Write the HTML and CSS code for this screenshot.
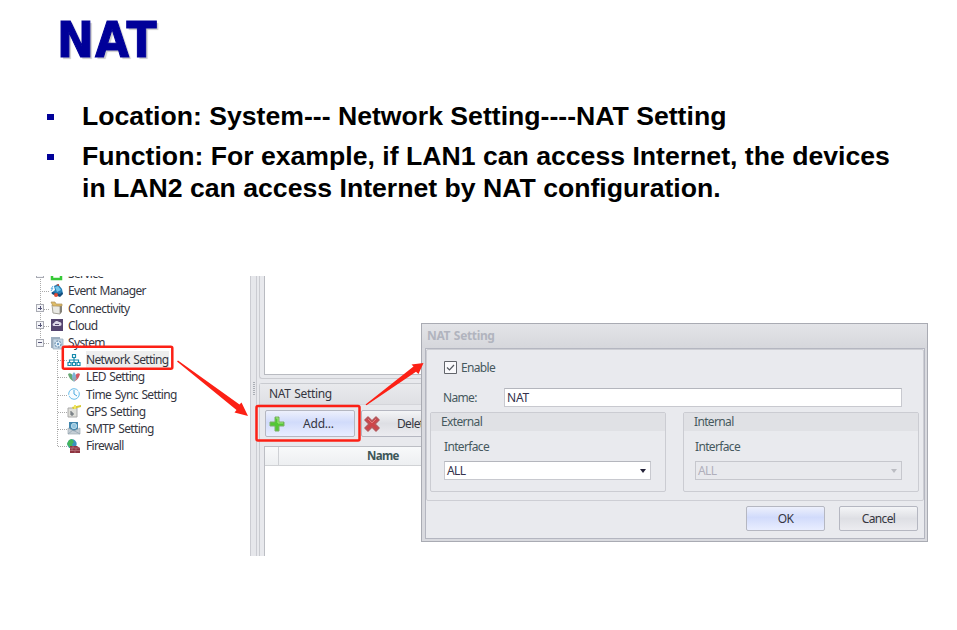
FILE: index.html
```html
<!DOCTYPE html>
<html lang="en">
<head>
<meta charset="utf-8">
<title>NAT</title>
<link rel="stylesheet" href="styles.css">
</head>
<body>
<main class="slide">
<h1 class="title">NAT</h1>
<ul class="points">
<li><span class="l1">Location: System--- Network Setting----NAT Setting</span></li>
<li><span>Function: For example, if LAN1 can access Internet, the devices<br>in LAN2 can access Internet by NAT configuration.</span></li>
</ul>
<section class="shot">
<nav class="tree">
<ul class="level0">
<li class="row"><i class="exp plus"></i><svg class="ic" viewBox="0 0 14 14"><path d="M2 7v5h9V9" fill="none" stroke="#36c936" stroke-width="2.500"/><path d="m8 9 3-4 3 4z" fill="#36c936"/></svg><span>Service</span></li>
<li class="row"><i class="exp none"></i><svg class="ic" viewBox="0 0 14 14"><path d="M1 5 3 2M1 7l2-3" stroke="#59aee0"/><path d="M4 2 8 0l4 5 1 5-9 1-3-2 4-3z" fill="#287fb5"/><path d="m5 3 3-1 3 4-4 2z" fill="#73c7ec"/><path d="m2 8 8 2 2-2 1 2-3 3-8-3z" fill="#174e7b"/><circle cx="6" cy="11" r="2" fill="#db4b36"/><path d="m6 1 3-1v2" fill="#c7452c"/></svg><span>Event Manager</span></li>
<li class="row"><i class="exp plus"></i><svg class="ic" viewBox="0 0 14 14"><path d="m2 4 8 1v8l-7-1z" fill="#e9e9e4" stroke="#a5a399"/><path d="m10 5 2-2v8l-2 2z" fill="#858177"/><path d="M1 1h4l1 2h6v2H3z" fill="#dfbd68" stroke="#ad905a" stroke-width=".7"/></svg><span>Connectivity</span></li>
<li class="row"><i class="exp plus"></i><svg class="ic" viewBox="0 0 14 14"><path d="M1 1h12v12H1z" fill="#554570"/><path d="M4 8a1.500 1.500 0 0 1 0-3 3 3 0 0 1 5-1 2 2 0 0 1 1 4z" fill="#ddd8e8"/><path d="M5 6.500h4" stroke="#554570"/></svg><span>Cloud</span></li>
<li class="row"><i class="exp minus"></i><svg class="ic" viewBox="0 0 14 14"><path d="M1 1h9v11H1z" fill="#9eafc1"/><path d="M3 3h10v10H3z" fill="#c5d7e7" stroke="#97a6b5" stroke-width=".7"/><circle cx="8" cy="8" r="3" fill="#e9f5fc" stroke="#7999b3" stroke-width="1.300" stroke-dasharray="2 1"/><circle cx="8" cy="8" r="1.200" fill="#6e9bc6"/></svg><span>System</span></li>
</ul>
<ul class="level1">
<li class="row"><svg class="ic" viewBox="0 0 14 14"><path d="M5.500 1.500h3v3h-3zM1 9.500h3v3H1zm4.500 0h3v3h-3zm4.500 0h3v3h-3zM7 5v4M2.500 9V7h9v2" fill="none" stroke="#198bad" stroke-width="1.200"/></svg><span class="sel">Network Setting</span></li>
<li class="row"><svg class="ic" viewBox="0 0 14 14"><path d="M1 4q3-2 5 2v5Q2 9 1 4" fill="#66a872"/><path d="M13 4q-3-2-5 2v5q4-2 5-7" fill="#d65761"/><path d="M7 2Q3 6 7 12q4-6 0-10" fill="#7fb4d8"/><path d="m5 8 2 4 3-4-2-1z" fill="#93a9b9"/></svg><span>LED Setting</span></li>
<li class="row"><svg class="ic" viewBox="0 0 14 14"><circle cx="7" cy="7" r="5.300" fill="#f7fcff" stroke="#68bce8" stroke-dasharray="14 1"/><path d="M7 3v4l3 2" fill="none" stroke="#4aa9df"/></svg><span>Time Sync Setting</span></li>
<li class="row"><svg class="ic" viewBox="0 0 14 14"><path d="M1 4h9v9H1z" fill="#deded9" stroke="#aaa"/><path d="M4 7v4h2V9H4" fill="none" stroke="#5c646c"/><path d="m5 3 9-2v2L6 5z" fill="#d8c936"/><path d="M8 1v4" stroke="#f1e85e" stroke-width="2"/></svg><span>GPS Setting</span></li>
<li class="row"><svg class="ic" viewBox="0 0 14 14"><path d="M2 1h9v9H2z" fill="#4286ad"/><circle cx="7" cy="5" r="2.700" fill="#93c5df" stroke="#b9d9e8"/><path d="m1 7 6 3 6-3v6H1z" fill="#c5ced5" stroke="#a1adb5" stroke-width=".7"/><path d="m1 13 5-4 7 4" fill="none" stroke="#8ea1ae" stroke-width=".7"/></svg><span>SMTP Setting</span></li>
<li class="row"><svg class="ic" viewBox="0 0 14 14"><circle cx="5" cy="5" r="4.700" fill="#3a91bd"/><path d="m2 1 3-1 2 3-2 2 1 3-3 1-3-4z" fill="#43b65b"/><path d="M3 7h7l3 2v5H3z" fill="#8f3441"/><path d="M3 9h10M3 11.500h10M6 7v2M9 9v2M5 9v3M8 12v2" stroke="#c99099" stroke-width=".5"/></svg><span>Firewall</span></li>
</ul>
</nav>
<div class="splitter"></div>
<div class="work">
<div class="upper"><div class="blank"></div></div>
<div class="lower">
<div class="phead">NAT Setting</div>
<div class="tools">
<button class="btn add"><svg viewBox="0 0 16 16"><path d="M6 1h4v5h5v4h-5v5H6v-5H1V6h5z" fill="#53c736" stroke="#7eaf68"/><path d="M7 2h2v5h5" fill="none" stroke="#a4e780"/></svg><span>Add...</span></button>
<button class="btn del"><svg viewBox="0 0 16 16"><path d="m4 1 4 4 4-4 3 3-4 4 4 4-3 3-4-4-4 4-3-3 4-4-4-4z" fill="#ce4449" stroke="#b6585c" stroke-width="1.500" stroke-linejoin="round"/><path d="m4 3 4 4 4-4" fill="none" stroke="#e17b7b"/></svg><span>Delete</span></button>
</div>
<div class="table"><div class="thead"><span></span><b>Name</b></div></div>
</div>
</div>
<div class="dialog">
<div class="dtitle">NAT Setting</div>
<div class="frame">
<div class="page">
<div class="enable"><svg viewBox="0 0 13 13"><path d="M.5.500h12v12H.5z" fill="#fafafc" stroke="#62656b"/><path d="m3 6.500 2.500 2.500L10 4" fill="none" stroke="#555960" stroke-width="1.200"/></svg><span>Enable</span></div>
<div class="namerow"><label>Name:</label><div class="field">NAT</div></div>
<div class="groups">
<div class="group"><div class="ghead">External</div><div class="glabel">Interface</div><div class="field select">ALL<i></i></div></div>
<div class="group"><div class="ghead">Internal</div><div class="glabel">Interface</div><div class="field select off">ALL<i></i></div></div>
</div>
</div>
<div class="actions"><button class="btn ok">OK</button><button class="btn cancel">Cancel</button></div>
</div>
</div>
<svg class="marks" viewBox="0 276 957 280">
<g fill="none" stroke="#fc2015" stroke-width="2.500"><rect x="62.800" y="346.800" width="109.500" height="22" rx="1.500"/><rect x="256.500" y="406" width="103" height="34.500" rx="1.500"/></g>
<g fill="#fc2015"><path d="M177 361.500 178 360.500 239.500 404.500 241.500 402.500 248 416 234.500 412.500 236.500 410z"/><path d="M365.500 404.500 413.500 366.500 411.500 364.500 423.500 363 418.500 374 416 371.800 366.500 405.300z"/></g>
</svg>
</section>
</main>
</body>
</html>
```
FILE: styles.css
```css
* { box-sizing: border-box; }
body { margin: 0; background: #fff; }
ul { list-style: none; margin: 0; padding: 0; }
.slide { width: 957px; height: 630px; overflow: hidden; }
.title {
  margin: 0; padding: 11px 0 0 57px; height: 100px;
  font: bold 49px/60px "DejaVu Sans Condensed", "DejaVu Sans", sans-serif; font-stretch: condensed;
  letter-spacing: 1.200px; -webkit-text-stroke: 1px #009;
  color: #009; text-shadow: 2px 2px 1px #ccc;
}
.points { height: 176px; font: bold 26.640px/32px "Liberation Sans", sans-serif; color: #000; }
.points li { display: flex; padding-left: 47px; margin-bottom: 8px; white-space: nowrap; }
.points li::before { content: ""; width: 7px; height: 6px; margin: 14px 28px 0 0; background: #009; }
.shot {
  position: relative; display: flex; height: 280px; overflow: hidden;
  font: 12px/17px "Noto Sans", sans-serif; letter-spacing: -.65px; word-spacing: 1px; color: #35363f; white-space: nowrap;
}
.tree { width: 250px; padding-left: 36px; margin-top: -10.800px; }
.level0 { background: repeating-linear-gradient(#aaa 0 1px, transparent 1px 2px) 4px 0 / 1px 77px no-repeat; }
.level1 { margin-left: 21px; background: repeating-linear-gradient(#aaa 0 1px, transparent 1px 2px) 0 0 / 1px 95px no-repeat; }
.row { display: flex; align-items: center; height: 17.200px; }
.level0 .row { background: repeating-linear-gradient(90deg, #aaa 0 1px, transparent 1px 2px) 4px 9px / 10px 1px no-repeat; }
.level1 .row { background: repeating-linear-gradient(90deg, #aaa 0 1px, transparent 1px 2px) 1px 9px / 9px 1px no-repeat; padding-left: 10px; }
.ic { width: 14px; height: 14px; flex: none; margin-right: 4px; }
.level1 .ic { margin-right: 5px; }
.sel { background: #eee; }
.exp { width: 8px; height: 8px; margin-right: 6px; flex: none; border: 1px solid #a9abb3; background: #f4f5f9; }
.exp.plus { background: linear-gradient(#557, #557) 1px 2.500px / 4px 1px no-repeat, linear-gradient(#557, #557) 2.500px 1px / 1px 4px no-repeat, #f4f5f9; }
.exp.minus { background: linear-gradient(#557, #557) 1px 2.500px / 4px 1px no-repeat, #f4f5f9; }
.exp.none { visibility: hidden; }
.splitter {
  width: 7px; border: solid #cbccd2; border-width: 0 1px;
  background: repeating-linear-gradient(#aaaeb5 0 1px, transparent 1px 2px) 2px 106px / 2px 13px no-repeat, #e6e7eb;
}
.work { flex: 1; max-width: 200px; padding-left: 2px; background: #e8e9ed; }
.upper { height: 103px; padding-left: 4px; border: solid #cbccd1; border-width: 0 0 1px 1px; border-radius: 0 0 0 3px; }
.blank { height: 99px; background: #fff; border: solid #b9bbc1; border-width: 0 0 1px 1px; }
.lower { margin-top: 4px; height: 173px; border: solid #c9cbd0; border-width: 1px 0 0 1px; border-radius: 3px 0 0; }
.phead { height: 21px; padding-left: 9px; line-height: 20px; letter-spacing: -.35px; background: linear-gradient(#e9eaed, #dfe0e4); border-bottom: 1px solid #d4d5da; }
.tools { display: flex; gap: 6px; padding: 5px 0 0 5px; }
.btn {
  display: flex; align-items: center; justify-content: center; padding: 0;
  border: 1px solid #b5b7c1; border-radius: 2px; font: inherit; letter-spacing: inherit; color: #35363f;
  background: linear-gradient(#f4f5f7, #dedfe4 50%, #ececf0);
}
.add, .del { width: 90px; height: 27px; justify-content: flex-start; padding-left: 3px; }
.btn svg { width: 16px; height: 16px; flex: none; }
.add, .ok { background: linear-gradient(#edf0fc, #d1dbfb 45%, #e9eeff); }
.add span { margin-left: 18px; letter-spacing: -.2px; }
.del { padding-left: 2px; }
.del span { margin-left: 17px; }
.table { margin: 9px 0 0 4px; height: 110px; border: solid #bcbec4; border-width: 1px 0 0 1px; background: #fff; }
.thead { display: flex; height: 19px; line-height: 18px; background: linear-gradient(#f8f9fa, #edeff1); border-bottom: 1px solid #d0d2d5; color: #3d5658; }
.thead span { width: 14px; border-right: 1px solid #cfd1d5; }
.thead b { padding-left: 88px; font-size: 11.500px; }
.dialog {
  position: absolute; left: 421px; top: 47px; width: 507px; height: 219px;
  border: 1px solid #a9abb3; background: #d9dadf; padding: 0 2px 2px 3px; color: #46595e;
}
.dtitle { height: 24px; margin: 0 -2px 0 -3px; padding-left: 5px; font-weight: bold; letter-spacing: -.35px; line-height: 24px; color: #b1b4be; background: linear-gradient(#e3e4e8, #d6d7dc); }
.frame { height: 191px; border: 1px solid #b4b6c0; background: #e9eaee; }
.page { height: 152px; border: 1px solid #cdced4; border-radius: 2px; padding: 10px 3px 0; }
.enable { display: flex; align-items: center; gap: 4px; height: 16px; padding-left: 14px; }
.enable svg { width: 13px; height: 13px; margin-top: -1px; }
.enable span { margin-top: -1px; }
.namerow { display: flex; align-items: center; height: 19px; margin: 12px 0 5px; padding-left: 13px; }
.namerow label { width: 61px; }
.field { height: 19px; line-height: 17px; padding-left: 2px; border: 1px solid #c8c9cf; border-top-color: #b4b6bd; background: #fff; color: #35324c; }
.namerow .field { width: 398px; letter-spacing: -.2px; }
.groups { display: flex; gap: 17px; }
.group { width: 236px; height: 80px; border: 1px solid #cbccd2; border-radius: 2px; }
.ghead { height: 18px; padding-left: 10px; line-height: 18px; background: #e0e1e5; }
.glabel { padding: 7px 0 6px 13px; }
.group + .group .glabel { padding-left: 11px; }
.select { display: flex; justify-content: space-between; align-items: center; margin-left: 13px; width: 207px; padding-right: 4px; }
.group + .group .select { margin-left: 11px; }
.select i { border: 3.500px solid transparent; border-top: 4px solid #25233a; border-bottom: 0; }
.off { background: #e8e9ed; color: #b0afbb; border-color: #c6c7cd; }
.off i { border-top-color: #bbbcc2; }
.actions { display: flex; justify-content: flex-end; gap: 14px; padding: 5px 6px 0 0; }
.actions .btn { width: 79px; height: 25px; }
.marks { position: absolute; left: 0; top: 0; width: 957px; height: 280px; }
```
